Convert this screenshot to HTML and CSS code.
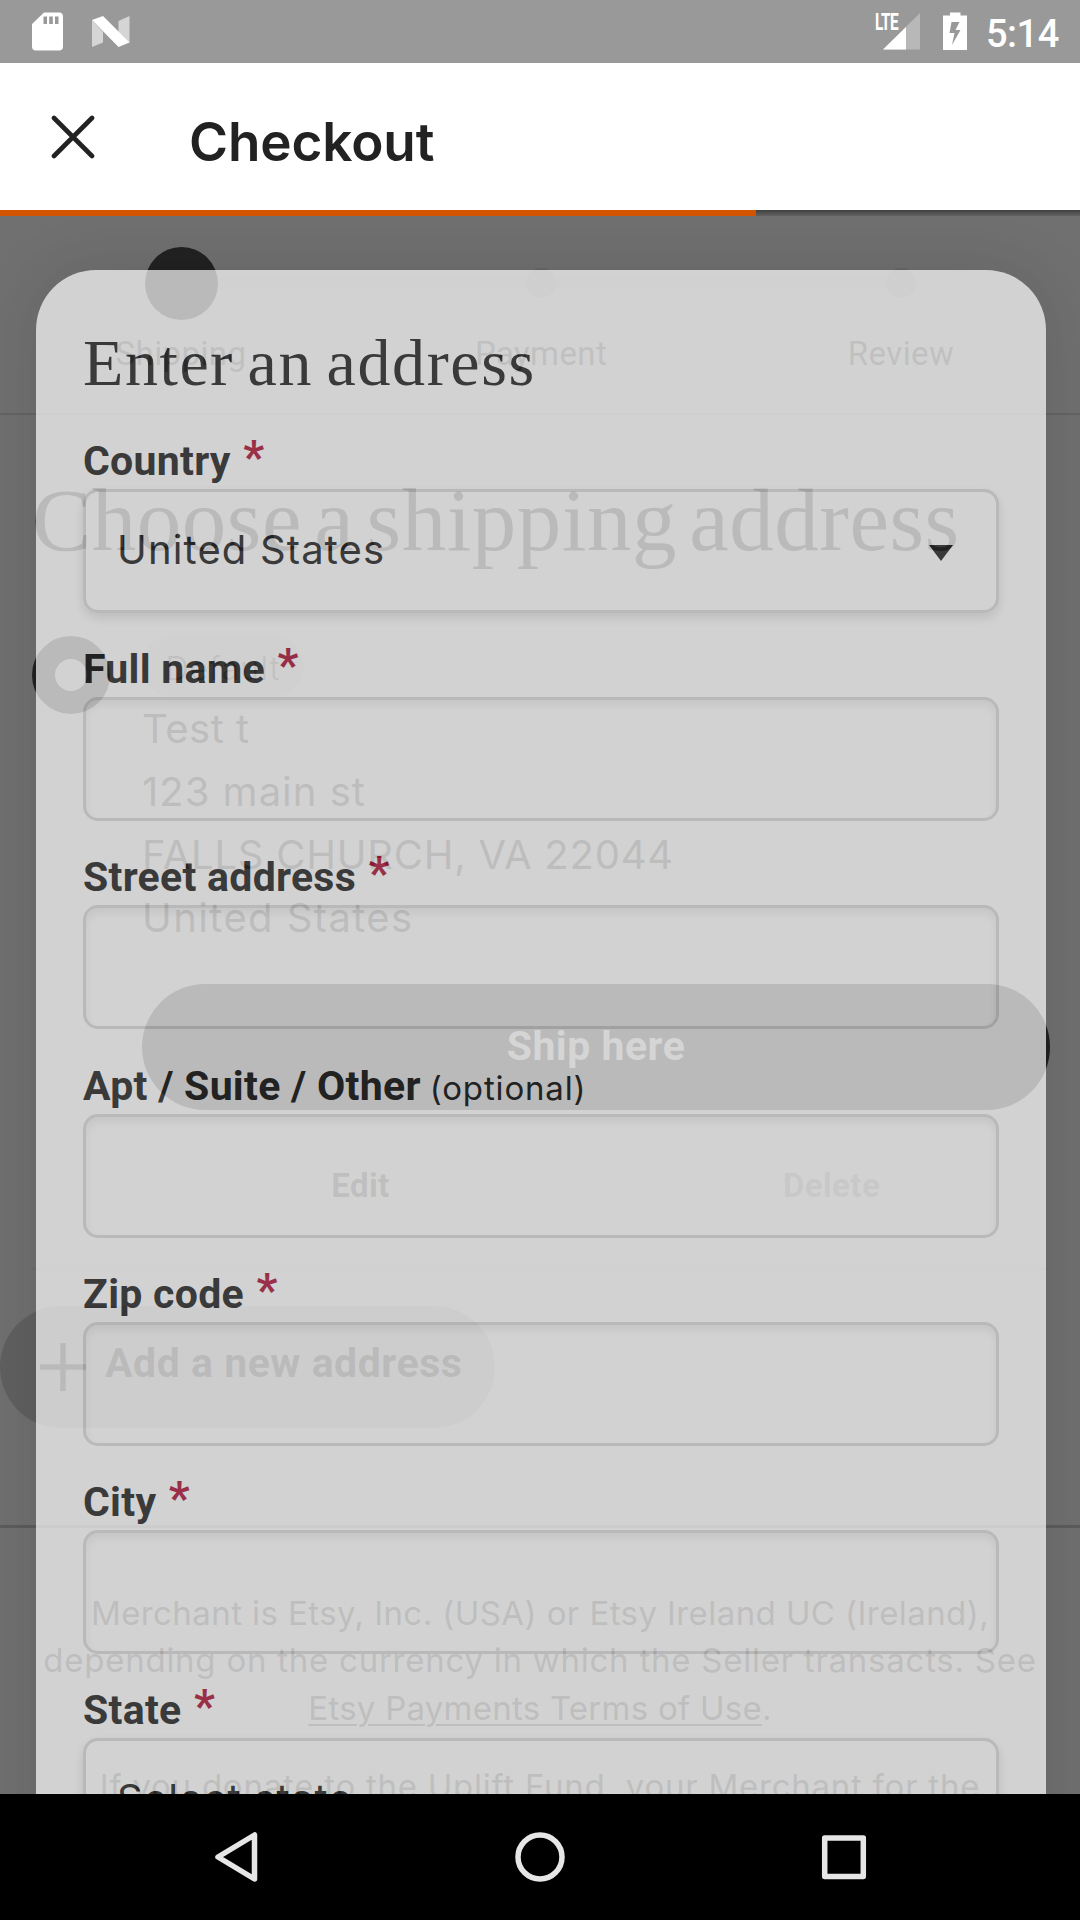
FILE: index.html
```html
<!DOCTYPE html>
<html lang="en">
<head>
<meta charset="utf-8">
<title>Checkout</title>
<link rel="stylesheet" href="styles.css">
</head>
<body>
<div class="screen">
  <header class="status">
    <svg class="status-left" width="110" height="63" viewBox="0 0 110 63">
      <path fill="#fff" fill-rule="evenodd" d="M12 12.500H27Q31 12.500 31 16.500V46.500Q31 50.500 27 50.500H4Q0 50.500 0 46.500V24ZM11.500 16.500V24H15V16.500ZM17.200 16.500V24H20.800V16.500ZM23 16.500V24H26.500V16.500Z"/>
      <path fill="#d5d5d5" d="M60 20 71 32V42.500L60 47ZM86.500 21 97.500 16V43L86.500 32Z"/>
      <path fill="#fff" d="M60 20 71 16 97.500 42.500 86.500 47Z"/>
    </svg>
    <div class="status-right">
      <div class="signal">
        <span class="lte">LTE</span>
        <svg width="48" height="63" viewBox="0 0 48 63"><path fill="#b8b8b8" d="M46 13V49.500H9Z"/><path fill="#fff" d="M32 27V49.500H9Z"/></svg>
      </div>
      <svg class="battery" width="24" height="63" viewBox="0 0 24 63"><path fill="#fff" fill-rule="evenodd" d="M7 12.500H17.500V15.500H24V50H0V15.500H7ZM8.500 22 6.500 33H11.500L9 45 17.500 30H12.500L16.500 22Z"/></svg>
      <span class="clock">5:14</span>
    </div>
  </header>
  <div class="appbar">
    <svg class="close" width="44" height="44" viewBox="0 0 44 44"><path d="M3 3 41 41M41 3 3 41" fill="none" stroke="#222" stroke-width="4.600" stroke-linecap="round"/></svg>
    <h1 class="title">Checkout</h1>
  </div>
  <main class="content">
    <div class="checkout">
      <ol class="steps">
        <li class="step"><span class="dot dot-on"></span><span>Shipping</span></li>
        <li class="step"><span class="dot"></span><span>Payment</span></li>
        <li class="step"><span class="dot"></span><span>Review</span></li>
      </ol>
      <section class="choose">
        <h2 class="choose-title">Choose a shipping address</h2>
        <div class="option">
          <span class="radio"></span>
          <div class="option-body">
            <span class="pill">Default</span>
            <p class="address">Test t<br><span class="street">123 main st</span><br><span class="town">FALLS CHURCH, VA 22044</span><br><span class="country">United States</span></p>
            <div class="ship">Ship here</div>
            <div class="actions"><span>Edit</span><span class="delete">Delete</span></div>
          </div>
        </div>
        <div class="add">
          <svg width="48" height="48" viewBox="0 0 48 48"><path d="M1 24H47M24 0V48" stroke="#222" stroke-width="5.500"/></svg>
          <span>Add a new address</span>
        </div>
      </section>
      <footer class="legal">
        <p><span class="merchant">Merchant is Etsy, Inc. (USA) or Etsy Ireland UC (Ireland),</span><br><span class="seller">depending on the currency in which the Seller transacts. See</span><br><u>Etsy Payments Terms of Use</u>.</p>
        <p class="seller">If you donate to the Uplift Fund, your Merchant for the</p>
      </footer>
    </div>
    <form class="sheet">
      <h2 class="sheet-title">Enter an address</h2>
      <div class="field"><div class="label">Country<span class="req">*</span></div>
        <div class="box select"><span>United States</span><svg width="24" height="16" viewBox="0 0 24 16"><path d="M0 0H24L12 16Z" fill="#222"/></svg></div></div>
      <div class="field"><div class="label">Full name<span class="req">*</span></div><div class="box"></div></div>
      <div class="field"><div class="label">Street address<span class="req">*</span></div><div class="box"></div></div>
      <div class="field"><div class="label">Apt / Suite / Other<span class="opt">(optional)</span></div><div class="box"></div></div>
      <div class="field"><div class="label">Zip code<span class="req">*</span></div><div class="box"></div></div>
      <div class="field"><div class="label">City<span class="req">*</span></div><div class="box"></div></div>
      <div class="field"><div class="label">State<span class="req">*</span></div><div class="box select"><span>Select state</span></div></div>
    </form>
    <div class="progress"></div>
  </main>
  <nav class="nav">
    <svg width="1080" height="126" viewBox="0 0 1080 126" fill="none" stroke="#e6e6e6" stroke-width="5.500" stroke-linejoin="round">
      <path d="M218 63 254.500 41V85Z"/><circle cx="540" cy="63" r="22"/><rect x="824.700" y="44" width="38.600" height="38.600"/>
    </svg>
  </nav>
</div>
</body>
</html>
```
FILE: styles.css
```css
* { box-sizing: border-box; }
body, h1, h2, p, ol { margin: 0; padding: 0; }
.screen {
  width: 1080px; height: 1920px; overflow: hidden;
  display: flex; flex-direction: column;
  color: #222; font-family: Roboto, sans-serif;
}
.status {
  height: 63px; flex: none; padding: 0 22px 0 32px;
  display: flex; justify-content: space-between; background: #999; color: #fff;
}
.status-right { display: flex; align-items: center; }
.signal { position: relative; height: 63px; margin-right: 21px; }
.lte { position: absolute; left: 1px; top: 11px; font: 700 23px/23px Roboto, sans-serif; letter-spacing: -.8px; transform: scaleX(.67); transform-origin: 0 0; }
.signal svg { display: block; }
.battery { margin-right: 19px; }
.clock { width: 72px; font-size: 38px; font-weight: 500; line-height: 40px; margin-top: 4px; white-space: nowrap; letter-spacing: -.5px; }
.appbar { height: 147px; flex: none; display: flex; background: #fff; }
.close { margin: 51.500px 0 0 51px; }
.title { margin: 47px 0 0 94px; font: 600 53px/64px Inter, sans-serif; letter-spacing: -.1px; }
.content { position: relative; flex: 1; min-height: 0; overflow: hidden; background: #707070; }
.progress {
  position: absolute; left: 0; top: 0; width: 1080px; height: 6px;
  background: linear-gradient(90deg, #d35400 756px, transparent 756px), linear-gradient(#404040, #626262);
}
.steps { position: relative; height: 205px; padding: 36.500px 0 0 1px; border-bottom: 2px solid #646464; display: grid; grid-template-columns: repeat(3, 360px); list-style: none; }
.steps::before { content: ""; position: absolute; left: 217px; top: 67px; width: 684px; height: 12px; background: #6c6c6c; }
.step { position: relative; display: grid; grid-template-rows: 73px 40px; row-gap: 14px; justify-items: center; align-items: center; font-size: 33px; line-height: 40px; letter-spacing: .4px; }
.dot { width: 30px; height: 30px; border-radius: 50%; background: #656565; }
.dot-on { width: 73px; height: 73px; background: #222; }
.step > span:last-child { color: #363636; }
.choose { height: 1113px; padding: 53px 30px 0 32px; border-bottom: 3px solid #5c5c5c; display: flex; flex-direction: column; }
.choose-title { height: 100px; font: 400 89px/104px "Liberation Serif", serif; white-space: nowrap; letter-spacing: .5px; word-spacing: -10.500px; }
.option { margin-top: 67px; height: 635px; flex: none; border-bottom: 2px solid #6c6c6c; display: flex; gap: 32px; }
.radio { width: 78px; height: 78px; flex: none; margin-top: 1px; border: 23px solid #222; border-radius: 50%; }
.option-body { flex: 1; display: flex; flex-direction: column; }
.pill { width: 162px; height: 62px; border-radius: 31px; background: #686868; color: #363636; font: 350 32px/68px Inter, sans-serif; letter-spacing: 1.300px; text-align: center; }
.address { font: 400 40px/63px Inter, sans-serif; letter-spacing: .5px; white-space: nowrap; color: #2a2a2a; }
.street { letter-spacing: 1px; }
.town { letter-spacing: .75px; }
.country { letter-spacing: 1.400px; }
.ship { margin-top: 35px; height: 126px; border-radius: 63px; background: #222; color: #777; font-weight: 700; font-size: 41px; line-height: 124px; text-align: center; letter-spacing: .5px; }
.actions { margin: 56px -17px 0; display: grid; grid-template-columns: 1fr 1fr; text-align: center; font-weight: 700; font-size: 33px; line-height: 40px; color: #303030; letter-spacing: .4px; }
.delete { color: #505050; }
.add { margin: 36px 0 0 -32px; width: 495px; height: 122px; border-radius: 61px; background: #606060; display: flex; align-items: center; padding-left: 39px; gap: 18px; font-weight: 700; font-size: 41px; white-space: nowrap; letter-spacing: .52px; }
.add span { line-height: 48px; padding-bottom: 8px; }
.legal { padding-top: 62px; text-align: center; font: 400 33px/47.300px Inter, sans-serif; white-space: nowrap; color: #2e2e2e; letter-spacing: .25px; display: flex; flex-direction: column; gap: 31px; }
.merchant { letter-spacing: .42px; }
.seller { letter-spacing: .75px; }
.legal u { text-decoration-thickness: 2px; text-underline-offset: 4px; }
.sheet {
  position: absolute; left: 36px; top: 60px; width: 1009.500px; height: 1640px; padding: 53px 47px 0 47px;
  border-radius: 60px 60px 0 0; background: #fff; opacity: .69; box-shadow: 0 0 60px rgba(0, 0, 0, .16);
}
.sheet-title { margin-bottom: 34px; font: 400 66px/80px "Liberation Serif", serif; white-space: nowrap; letter-spacing: 1.600px; word-spacing: -4.500px; }
.field { height: 208.200px; }
.label { height: 48px; margin-bottom: 4px; display: flex; align-items: baseline; font-weight: 700; font-size: 41px; line-height: 48px; white-space: nowrap; letter-spacing: .28px; }
.req { margin-left: 12.500px; color: #ad1237; font-size: 46px; line-height: 40px; position: relative; top: -2px; }
.opt { margin-left: 9px; font: 400 33px/40px Inter, sans-serif; letter-spacing: .85px; }
.box { height: 124px; border: 3px solid #dadada; border-radius: 15px; box-shadow: inset 0 5px 10px rgba(0, 0, 0, .08); }
.select { box-shadow: 0 5px 12px rgba(0, 0, 0, .13); display: flex; align-items: flex-start; justify-content: space-between; padding: 34px 42.500px 0 31px; font: 400 40px/48px Inter, sans-serif; letter-spacing: 1.150px; }
.select svg { margin-top: 19px; }
.nav { height: 126px; flex: none; background: #000; }
.nav svg { display: block; }
```
